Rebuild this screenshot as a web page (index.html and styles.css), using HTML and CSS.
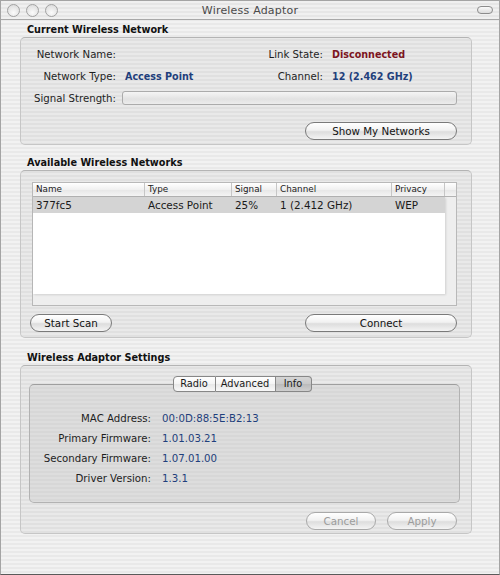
FILE: index.html
```html
<!DOCTYPE html>
<html lang="en">

<head>
  <meta charset="UTF-8">
  <meta name="viewport" content="width=device-width, initial-scale=1.0">
  <title>Wireless Adaptor</title>
  <link rel="stylesheet" href="styles.css">
</head>

<body>
  <div class="window">
    <div class="titlebar">
      <div class="lights">
        <span class="light"></span>
        <span class="light"></span>
        <span class="light"></span>
      </div>
      <div class="title">Wireless Adaptor</div>
      <div class="toolbar-toggle"><span></span></div>
    </div>

    <div class="content">
      <h2 class="section-title first">Current Wireless Network</h2>
      <div class="group current">
        <div class="info-grid">
          <div class="label">Network Name:</div>
          <div class="value"></div>
          <div class="label">Link State:</div>
          <div class="value bad">Disconnected</div>

          <div class="label">Network Type:</div>
          <div class="value">Access Point</div>
          <div class="label">Channel:</div>
          <div class="value">12 (2.462 GHz)</div>

          <div class="label">Signal Strength:</div>
          <div class="signal-bar"></div>
        </div>
        <div class="button-row right">
          <button class="btn wide">Show My Networks</button>
        </div>
      </div>

      <h2 class="section-title">Available Wireless Networks</h2>
      <div class="group networks">
        <div class="table">
          <div class="table-head">
            <div class="th">Name</div>
            <div class="th">Type</div>
            <div class="th">Signal</div>
            <div class="th">Channel</div>
            <div class="th">Privacy</div>
            <div class="th"></div>
          </div>
          <div class="table-body">
            <div class="tr selected">
              <div class="td">377fc5</div>
              <div class="td">Access Point</div>
              <div class="td">25%</div>
              <div class="td">1 (2.412 GHz)</div>
              <div class="td">WEP</div>
            </div>
          </div>
        </div>
        <div class="button-row split">
          <button class="btn scan">Start Scan</button>
          <button class="btn wide">Connect</button>
        </div>
      </div>

      <h2 class="section-title last">Wireless Adaptor Settings</h2>
      <div class="group settings">
        <div class="tabs">
          <div class="tab radio">Radio</div>
          <div class="tab advanced">Advanced</div>
          <div class="tab info active">Info</div>
        </div>
        <div class="tab-box">
          <div class="adaptor-grid">
            <div class="label">MAC Address:</div>
            <div class="value">00:0D:88:5E:B2:13</div>
            <div class="label">Primary Firmware:</div>
            <div class="value">1.01.03.21</div>
            <div class="label">Secondary Firmware:</div>
            <div class="value">1.07.01.00</div>
            <div class="label">Driver Version:</div>
            <div class="value">1.3.1</div>
          </div>
        </div>
        <div class="button-row right dialog">
          <button class="btn small" disabled>Cancel</button>
          <button class="btn small" disabled>Apply</button>
        </div>
      </div>
    </div>
  </div>
</body>

</html>
```

FILE: styles.css
```css
body {
  margin: 0;
  font-family: "DejaVu Sans", "Noto Sans", sans-serif;
  font-size: 10.2px;
  color: #1a1a1a;
}

.window {
  width: 500px;
  height: 575px;
  box-sizing: border-box;
  border: 1px solid #a4a4a4;
  border-bottom-color: #5a5a5a;
  background: repeating-linear-gradient(180deg, #f2f2f2 0, #f2f2f2 2px, #e9e9e9 2px, #e9e9e9 4px);
  overflow: hidden;
}

/* title bar */
.titlebar {
  height: 18px;
  border-bottom: 1px solid #a8a8a8;
  display: grid;
  grid-template-columns: 1fr auto 1fr;
  align-items: center;
  background: repeating-linear-gradient(180deg, #f0f0f0 0, #f0f0f0 2px, #e6e6e6 2px, #e6e6e6 4px);
}

.lights {
  display: flex;
  gap: 6px;
  padding-left: 6px;
}

.light {
  width: 11px;
  height: 11px;
  border-radius: 50%;
  border: 1px solid #a2a2a2;
  background: radial-gradient(circle at 50% 70%, #fbfbfb 0, #dedede 80%);
}

.title {
  color: #4a4a4a;
  font-size: 11px;
  letter-spacing: 0.2px;
}

.toolbar-toggle {
  display: flex;
  justify-content: flex-end;
  padding-right: 6px;
}

.toolbar-toggle span {
  width: 14px;
  height: 6px;
  border: 1px solid #8c8c8c;
  border-radius: 4px;
  background: linear-gradient(#fafafa, #dcdcdc);
}

/* sections */
.content {
  padding: 0 27px 0 19px;
}

.section-title {
  margin: 11px 0 0 7px;
  height: 14px;
  line-height: 14px;
  font-size: 9.7px;
  font-weight: bold;
  color: #111;
}

.section-title.first {
  margin-top: 3px;
}

.section-title.last {
  margin-top: 13px;
}

.group {
  border: 1px solid #c6c6c6;
  border-top-color: #b4b4b4;
  border-radius: 5px;
  background: rgba(0, 0, 0, 0.035);
}

.label {
  text-align: right;
  color: #1e1e1e;
  white-space: nowrap;
}

.value {
  color: #1f3f7c;
  white-space: nowrap;
}

.value.bad {
  color: #7c1521;
  font-weight: bold;
  font-size: 9.6px;
}

/* current network */
.current {
  height: 108px;
  box-sizing: border-box;
  padding: 9px 14px 0 9px;
}

.info-grid {
  display: grid;
  grid-template-columns: 86px 125px 64px 1fr;
  column-gap: 9px;
  row-gap: 8px;
  grid-auto-rows: 14px;
  align-items: center;
}

.info-grid .value {
  font-weight: bold;
  font-size: 9.6px;
}

.signal-bar {
  grid-column: 2 / 5;
  height: 12px;
  margin-left: -3px;
  border: 1px solid #ababab;
  border-radius: 3px;
  background: linear-gradient(#f5f5f5, #e2e2e2 60%, #ececec);
}

/* buttons */
.button-row {
  display: flex;
}

.button-row.right {
  justify-content: flex-end;
}

.button-row.split {
  justify-content: space-between;
}

.current .button-row {
  margin-top: 17px;
}

.btn {
  height: 18px;
  padding: 0;
  border: 1px solid #7a7a7a;
  border-radius: 9px;
  background: linear-gradient(#ffffff, #f2f2f2 45%, #dddddd 55%, #f4f4f4);
  font-family: inherit;
  font-size: 10.3px;
  color: #111;
}

.btn.wide {
  width: 152px;
}

.btn.scan {
  width: 82px;
}

.btn.small {
  width: 70px;
}

.btn:disabled {
  color: #9c9c9c;
  border-color: #a9a9a9;
}

/* networks table */
.networks {
  height: 168px;
  box-sizing: border-box;
  padding: 11px 14px 0 9px;
}

.table {
  margin-left: 2px;
  height: 124px;
  border: 1px solid #b8b8b8;
  box-sizing: border-box;
  background: #eeeeee;
  display: flex;
  flex-direction: column;
}

.table-head {
  display: grid;
  grid-template-columns: 112px 87px 45px 115px 53px 1fr;
  height: 13px;
  border-bottom: 1px solid #b2b2b2;
  background: linear-gradient(#ffffff, #f0f0f0 50%, #e6e6e6 51%, #f4f4f4);
}

.th {
  font-size: 8.8px;
  line-height: 13px;
  padding-left: 3px;
  border-right: 1px solid #c6c6c6;
  color: #222;
}

.th:last-child {
  border-right: none;
}

.table-body {
  width: 412px;
  height: 97px;
  background: #ffffff;
  box-shadow: 1px 1px 2px rgba(0, 0, 0, 0.12);
}

.tr {
  display: grid;
  grid-template-columns: 112px 87px 45px 115px 53px;
  height: 16px;
  align-items: center;
}

.tr.selected {
  background: #d4d4d4;
}

.td {
  padding-left: 3px;
  white-space: nowrap;
  font-size: 10.4px;
}

.networks .button-row {
  margin-top: 8px;
}

/* settings */
.settings {
  height: 169px;
  box-sizing: border-box;
  padding: 10px 14px 0 8px;
}

.tabs {
  display: flex;
  justify-content: center;
  position: relative;
  z-index: 1;
  margin-bottom: -8px;
  padding-right: 2px;
}

.tab {
  height: 14px;
  line-height: 14px;
  text-align: center;
  border: 1px solid #878787;
  border-left: none;
  background: linear-gradient(#ffffff, #f4f4f4 50%, #e8e8e8 51%, #f8f8f8);
  font-size: 9.8px;
}

.tab.radio {
  width: 41px;
  border-left: 1px solid #878787;
  border-radius: 4px 0 0 4px;
}

.tab.advanced {
  width: 59px;
}

.tab.info {
  width: 35px;
  border-radius: 0 4px 4px 0;
}

.tab.active {
  background: linear-gradient(#d6d6d6, #c8c8c8 50%, #bababa 51%, #cfcfcf);
}

.tab-box {
  margin-right: -3px;
  height: 119px;
  box-sizing: border-box;
  border: 1px solid #b2b2b2;
  border-top-color: #9e9e9e;
  border-radius: 5px;
  background: repeating-linear-gradient(180deg, #dddddd 0, #dddddd 2px, #d7d7d7 2px, #d7d7d7 4px);
  padding-top: 26px;
}

.adaptor-grid {
  display: grid;
  grid-template-columns: 121px auto;
  column-gap: 11px;
  row-gap: 6px;
  grid-auto-rows: 14px;
  align-items: center;
}

.dialog {
  margin-top: 9px;
  gap: 11px;
}
```
